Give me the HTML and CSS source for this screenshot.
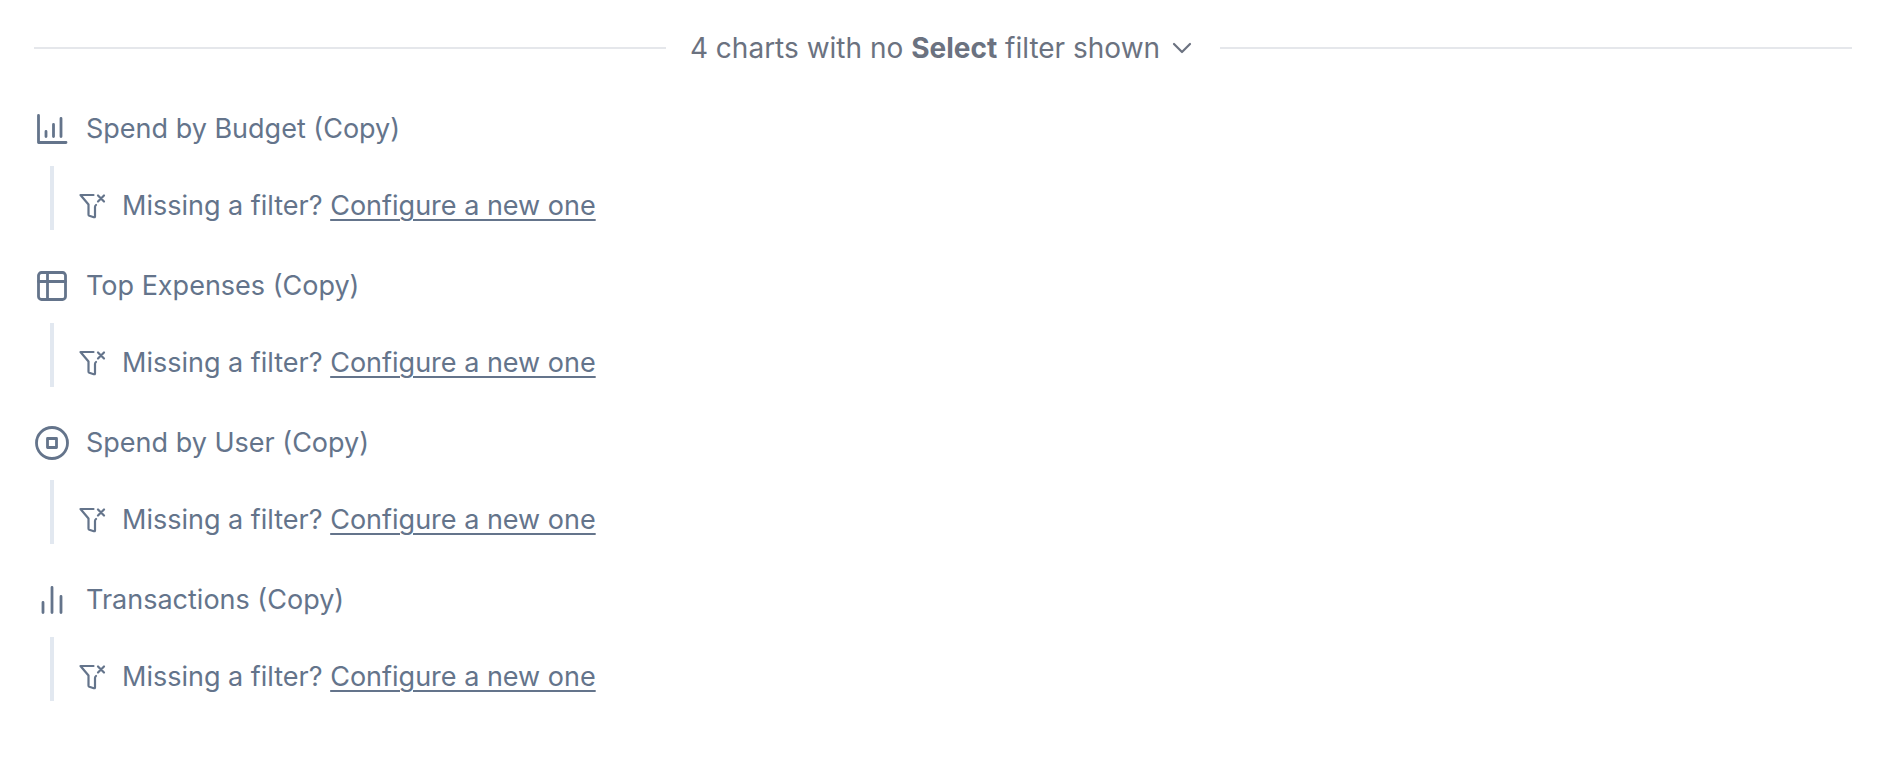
FILE: index.html
```html
<!DOCTYPE html>
<html lang="en">
<head>
<meta charset="utf-8">
<meta name="viewport" content="width=device-width, initial-scale=1">
<title>Dashboard filters</title>
<link rel="stylesheet" href="styles.css">
</head>
<body>
<svg class="sprite" aria-hidden="true">
  <symbol id="filter-x" viewBox="0 0 32 32">
    <path d="M17.5 5H4.5L12.5 14.5V24.5Q12.5 25.5 13.3 25.8L17.8 27.2Q19 27.5 19 26.5V17Q19 15.8 20 15M22 5.5L28 11.5M28 5.5L22 11.5"/>
  </symbol>
</svg>
<main class="panel">
  <div class="divider">
    <button class="toggle" type="button" aria-expanded="true">
      <span>4 charts with no <strong>Select</strong> filter shown</span>
      <svg class="chevron" viewBox="0 0 32 32" aria-hidden="true"><path d="M8 12L16 20L24 12"/></svg>
    </button>
  </div>
  <ul class="charts">
    <li class="chart">
      <div class="chart-title">
        <svg class="icon" viewBox="0 0 40 40" aria-hidden="true"><path d="M6.5 6.5V33.5H34M14 22.5V27.5M21.5 15.5V27.5M29 9.5V27.5"/></svg>
        <span>Spend by Budget (Copy)</span>
      </div>
      <div class="detail">
        <svg class="icon-small" aria-hidden="true"><use href="#filter-x"/></svg>
        <p>Missing a filter? <a href="#">Configure a new one</a></p>
      </div>
    </li>
    <li class="chart">
      <div class="chart-title">
        <svg class="icon" viewBox="0 0 40 40" aria-hidden="true"><rect x="6.5" y="6.5" width="27" height="27" rx="3"/><path d="M15.5 6.5V33.5M6.5 15.5H33.5"/></svg>
        <span>Top Expenses (Copy)</span>
      </div>
      <div class="detail">
        <svg class="icon-small" aria-hidden="true"><use href="#filter-x"/></svg>
        <p>Missing a filter? <a href="#">Configure a new one</a></p>
      </div>
    </li>
    <li class="chart">
      <div class="chart-title">
        <svg class="icon" viewBox="0 0 40 40" aria-hidden="true"><circle cx="20" cy="20" r="15.5"/><rect x="15.5" y="15.5" width="9" height="9"/></svg>
        <span>Spend by User (Copy)</span>
      </div>
      <div class="detail">
        <svg class="icon-small" aria-hidden="true"><use href="#filter-x"/></svg>
        <p>Missing a filter? <a href="#">Configure a new one</a></p>
      </div>
    </li>
    <li class="chart">
      <div class="chart-title">
        <svg class="icon" viewBox="0 0 40 40" aria-hidden="true"><path d="M11 22.5V32.5M20 7.5V32.5M29 16.5V32.5"/></svg>
        <span>Transactions (Copy)</span>
      </div>
      <div class="detail">
        <svg class="icon-small" aria-hidden="true"><use href="#filter-x"/></svg>
        <p>Missing a filter? <a href="#">Configure a new one</a></p>
      </div>
    </li>
  </ul>
</main>
</body>
</html>
```
FILE: styles.css
```css
* {
  box-sizing: border-box;
}

body {
  margin: 0;
  background: #fff;
  color: #64748b;
  font-family: Inter, "Liberation Sans", sans-serif;
  font-size: 27px;
  line-height: 40px;
}

.sprite {
  position: absolute;
  width: 0;
  height: 0;
}

.panel {
  padding: 28px 44px 40px 34px;
}

.divider {
  display: flex;
  align-items: center;
  font-size: 28px;
}

.divider::before,
.divider::after {
  content: "";
  flex: 1;
  height: 2px;
  background: #e5e7eb;
}

.toggle {
  display: flex;
  align-items: center;
  gap: 6px;
  padding: 0 22px 0 24px;
  border: 0;
  background: none;
  color: #6b7280;
  font: inherit;
  cursor: pointer;
}

.toggle strong {
  font-weight: 700;
}

svg {
  flex: none;
  fill: none;
  stroke: currentColor;
  stroke-linecap: round;
  stroke-linejoin: round;
}

.chevron {
  width: 32px;
  height: 32px;
  stroke-width: 2.2;
}

.charts {
  display: grid;
  gap: 36px;
  margin: 41px 0 0 -2px;
  padding: 0;
  list-style: none;
}

.chart-title {
  display: flex;
  align-items: center;
  gap: 14px;
}

.icon {
  width: 40px;
  height: 40px;
  stroke-width: 2.8;
}

.detail {
  display: flex;
  align-items: center;
  gap: 14px;
  height: 64px;
  margin: 17px 0 0 18px;
  padding: 16px 0 0 22px;
  border-left: 4px solid #e2e8f0;
}

.icon-small {
  width: 32px;
  height: 32px;
  stroke-width: 2.2;
}

.detail p {
  margin: 0;
}

.detail a {
  color: inherit;
  text-decoration-thickness: 2px;
  text-underline-offset: 4px;
}
```
